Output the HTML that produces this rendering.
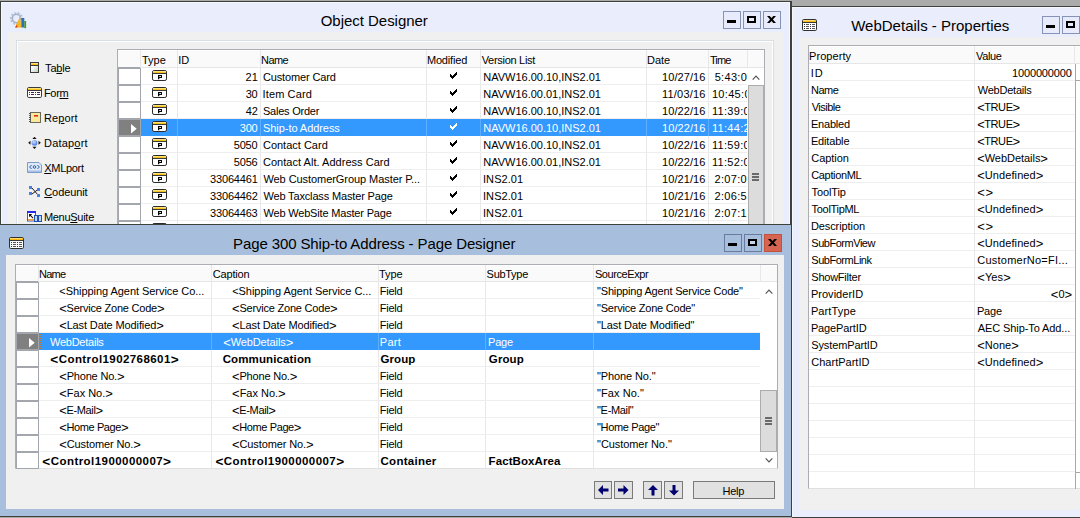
<!DOCTYPE html>
<html><head><meta charset="utf-8"><title>NAV</title><style>
*{box-sizing:border-box;margin:0;padding:0}
html,body{width:1080px;height:518px;overflow:hidden;background:#ABABAB}
body{position:relative;font-family:"Liberation Sans",sans-serif;font-size:11px;color:#000}
.a{position:absolute}
.t{position:absolute;white-space:nowrap;line-height:13px;height:13px}
.tt{position:absolute;white-space:nowrap;font-size:15px;line-height:18px}
.btn{position:absolute;width:18px;height:18px;border:1px solid #8593B6;background:#E7EBFB}
.hl{position:absolute;height:1px;background:#EEEEEE}
.vl{position:absolute;width:1px;background:#E8E8E8}
.sel{position:absolute;background:#fff;border:1px solid #A3A6AD}
.u{text-decoration:underline}
.b{font-weight:bold;font-size:11.5px}
.w{color:#fff}
.g{font-size:118.2%;line-height:0;position:relative;top:1px}
</style></head><body>
<div class="a" style="left:0;top:1px;width:792px;height:224px;background:#E9EDFC;border:1px solid #3E403C;border-right-width:2px;box-shadow:inset 1px 1px 0 #F6F8FF,inset -1px 0 0 #F6F8FF"></div>
<div class="a" style="left:8px;top:32px;width:775px;height:192px;background:#F0F0F0"></div>
<div class="a" style="left:16px;top:40px;width:758px;height:190px;border:1px solid #D9DEE3"></div>
<div class="a" style="left:17px;top:41px;width:756px;height:190px;border:1px solid #FFFFFF"></div>
<div class="tt " style="left:320.72px;top:12px;letter-spacing:-0.032px">Object Designer</div>
<svg class="a" style="left:8px;top:10px" width="20" height="20" viewBox="0 0 20 20"><circle cx="8.5" cy="8.5" r="5" fill="none" stroke="#B9C6DA" stroke-width="3.2" stroke-dasharray="1.7 1.3"/><circle cx="8.5" cy="8.5" r="4.2" fill="none" stroke="#A3B3CB" stroke-width="1.5"/><path d="M7 17.5 L12 6.5 L13.3 17.5Z" fill="#F5B81C"/><path d="M7 17.5 L9 14.5 L9.5 17.5Z" fill="#E23A1A"/><rect x="13.3" y="8" width="3" height="9.5" fill="#2E6FB5"/><rect x="16.3" y="11" width="1.8" height="7.2" fill="#3F9A1E"/></svg>
<div class="btn" style="left:723px;top:11px"></div>
<div class="btn" style="left:743px;top:11px"></div>
<div class="btn" style="left:763px;top:11px"></div>
<div class="a" style="left:727px;top:20px;width:9px;height:3px;background:#000"></div>
<div class="a" style="left:747px;top:16px;width:9px;height:7px;border:2px solid #000;background:transparent"></div>
<svg class="a" style="left:767px;top:16px" width="9" height="7" viewBox="0 0 9 7"><path d="M0 0 H2.7 L4.5 2.1 L6.3 0 H9 L5.9 3.5 L9 7 H6.3 L4.5 4.9 L2.7 7 H0 L3.1 3.5Z" fill="#000"/></svg>
<div class="t " style="left:45.08px;top:62px;letter-spacing:-0.182px">Ta<span class=u>b</span>le</div>
<div class="t " style="left:43.92px;top:87px;letter-spacing:-0.297px">For<span class=u>m</span></div>
<div class="t " style="left:43.92px;top:112px;letter-spacing:0.127px">Re<span class=u>p</span>ort</div>
<div class="t " style="left:44.02px;top:137px;letter-spacing:0.193px">Datap<span class=u>o</span>rt</div>
<div class="t " style="left:44.23px;top:162px;letter-spacing:-0.299px"><span class=u>X</span>MLport</div>
<div class="t " style="left:44.25px;top:186px;letter-spacing:-0.099px"><span class=u>C</span>odeunit</div>
<div class="t " style="left:43.92px;top:211px;letter-spacing:-0.282px">Menu<span class=u>S</span>uite</div>
<svg class="a" style="left:30px;top:62px" width="9" height="11" viewBox="0 0 9 11"><defs><linearGradient id="tg" x1="0" y1="0" x2="1" y2="1"><stop offset="0.3" stop-color="#fff"/><stop offset="1" stop-color="#B9CDB9"/></linearGradient></defs><rect x="0.5" y="0.5" width="8" height="10" fill="url(#tg)" stroke="#3A3A3A"/><rect x="1" y="1" width="7" height="2" fill="#F7BE16"/><rect x="1" y="1" width="7" height="1" fill="#FCE07A"/><rect x="1" y="3" width="7" height="1" fill="#3A3A3A"/></svg>
<svg class="a" style="left:27px;top:87px" width="15" height="11" viewBox="0 0 15 11"><rect x="0.5" y="0.5" width="14" height="10" rx="1.3" fill="#fff" stroke="#3A3A3A"/><rect x="1" y="1" width="13" height="2" fill="#F7BE16"/><rect x="1" y="1" width="13" height="1" fill="#FCE07A"/><rect x="1" y="3" width="13" height="1" fill="#3A3A3A"/><rect x="2" y="5" width="1" height="1" fill="#402850"/><rect x="4" y="5" width="3" height="1" fill="#402850"/><rect x="8" y="5" width="1" height="1" fill="#402850"/><rect x="10" y="5" width="3" height="1" fill="#402850"/><rect x="2" y="7" width="1" height="1" fill="#402850"/><rect x="4" y="7" width="3" height="1" fill="#402850"/><rect x="8" y="7" width="1" height="1" fill="#402850"/><rect x="10" y="7" width="3" height="1" fill="#402850"/></svg>
<svg class="a" style="left:28.5px;top:112px" width="12" height="11" viewBox="0 0 12 11"><rect x="1.5" y="0.5" width="10" height="10" fill="#FBE89A" stroke="#6A6A5A"/><rect x="5" y="3" width="4" height="1.6" fill="#D83018"/><rect x="0" y="1" width="2" height="1" fill="#555"/><rect x="0" y="3" width="2" height="1" fill="#555"/><rect x="0" y="5" width="2" height="1" fill="#555"/><rect x="0" y="7" width="2" height="1" fill="#555"/><rect x="0" y="9" width="2" height="1" fill="#555"/></svg>
<svg class="a" style="left:28px;top:137px" width="13" height="12" viewBox="0 0 13 12"><defs><radialGradient id="bg" cx="0.4" cy="0.35" r="0.7"><stop offset="0" stop-color="#CFE0FF"/><stop offset="1" stop-color="#3D6EDC"/></radialGradient></defs><circle cx="6.5" cy="5.8" r="2.9" fill="url(#bg)"/><path d="M6.5 -0.3 L8.6 2 H4.4Z M6.5 12 L8.6 9.7 H4.4Z M0.2 5.8 L2.5 3.8 V7.8Z M12.8 5.8 L10.5 3.8 V7.8Z" fill="#111"/></svg>
<svg class="a" style="left:27px;top:162px" width="15" height="11" viewBox="0 0 15 11"><path d="M0.5 0.5 H12 L14.5 3 V10.5 H0.5Z" fill="#DCE9FA" stroke="#7E9CC8"/><rect x="1" y="8.5" width="13" height="1.5" fill="#A8C0E6"/><path d="M4.6 3 L2.6 5 L4.6 7 M10.4 3 L12.4 5 L10.4 7" fill="none" stroke="#2C5AA8" stroke-width="1"/><circle cx="7.5" cy="5" r="1.3" fill="none" stroke="#2C5AA8"/></svg>
<svg class="a" style="left:29px;top:186px" width="12" height="11" viewBox="0 0 12 11"><path d="M3 2 L9 9 M3 8 L9 3.5" stroke="#222" stroke-width="1"/><rect x="0" y="0" width="3" height="3" fill="#4A80E6"/><rect x="8" y="2" width="3" height="3" fill="#4A80E6"/><rect x="0" y="6" width="3" height="3" fill="#4A80E6"/><rect x="8" y="8" width="3" height="3" fill="#4A80E6"/></svg>
<svg class="a" style="left:27px;top:211px" width="15" height="11" viewBox="0 0 15 11"><rect x="0.5" y="0.5" width="8" height="9.5" fill="#fff" stroke="#3A56D8"/><rect x="0" y="0" width="9" height="2" fill="#2A2AE8"/><rect x="1" y="8" width="7" height="1.6" fill="#F0A030"/><path d="M2 3 H5.2 L4 4.2 L6.5 6.7 L5.7 7.5 L3.2 5 L2 6.2Z" fill="#111"/><rect x="7.5" y="4.5" width="3" height="6" fill="#BFD6F6" stroke="#2050B0"/><rect x="11.5" y="4.5" width="3" height="6" fill="#BFD6F6" stroke="#2050B0"/></svg>
<div class="a" style="left:117px;top:49px;width:648px;height:180px;background:#fff;border:1px solid #ABADB3"></div>
<div class="a" style="left:118px;top:50px;width:646px;height:18px;background:#FAFAFA;border-top:1px solid #fff;border-bottom:1px solid #E6E6E6"></div>
<div class="a" style="left:118px;top:67px;width:23px;height:1px;background:#A3A6AD"></div>
<div class="vl" style="left:140px;top:50px;height:175px"></div>
<div class="vl" style="left:177px;top:50px;height:175px"></div>
<div class="vl" style="left:260px;top:50px;height:175px"></div>
<div class="vl" style="left:426px;top:50px;height:175px"></div>
<div class="vl" style="left:480px;top:50px;height:175px"></div>
<div class="vl" style="left:646px;top:50px;height:175px"></div>
<div class="vl" style="left:708px;top:50px;height:175px"></div>
<div class="vl" style="left:747px;top:50px;height:18px"></div>
<div class="t " style="left:141.98px;top:54px;letter-spacing:-0.018px">Type</div>
<div class="t " style="left:178.21px;top:54px;letter-spacing:0.000px">ID</div>
<div class="t " style="left:261.12px;top:54px;letter-spacing:-0.598px">Name</div>
<div class="t " style="left:426.92px;top:54px;letter-spacing:-0.163px">Modified</div>
<div class="t " style="left:481.64px;top:54px;letter-spacing:-0.282px">Version List</div>
<div class="t " style="left:647.02px;top:54px;letter-spacing:-0.030px">Date</div>
<div class="t " style="left:709.88px;top:54px;letter-spacing:-0.858px">Time</div>
<div class="sel" style="left:118px;top:68px;width:23px;height:17px"></div>
<div class="hl" style="left:141px;top:84px;width:606px"></div>
<svg class="a" style="left:152px;top:70px" width="15" height="11" viewBox="0 0 15 11"><rect x="0.5" y="0.5" width="14" height="10" rx="1.6" fill="#fff" stroke="#2A2A2A"/><rect x="1" y="1" width="13" height="2" fill="#F8C21C"/><rect x="1" y="1" width="13" height="1" fill="#FDE27A"/><rect x="1" y="3" width="13" height="1" fill="#3A3A3A"/><path d="M6 5 H10 V8 H7.3 V9.2 H6Z M7.3 6 V7 H8.9 V6Z" fill="#000" fill-rule="evenodd"/></svg>
<div class="t " style="left:245.49px;top:71px;letter-spacing:0.095px">21</div>
<div class="t " style="left:262.95px;top:71px;letter-spacing:-0.131px">Customer Card</div>
<svg class="a" style="left:450px;top:72px" width="7" height="7" viewBox="0 0 7 7" fill="#000" shape-rendering="crispEdges"><rect x="0" y="2" width="1" height="3"/><rect x="1" y="3" width="1" height="3"/><rect x="2" y="4" width="1" height="3"/><rect x="3" y="3" width="1" height="3"/><rect x="4" y="2" width="1" height="3"/><rect x="5" y="1" width="1" height="3"/><rect x="6" y="0" width="1" height="3"/></svg>
<div class="t " style="left:483.32px;top:71px;letter-spacing:-0.007px">NAVW16.00.10,INS2.01</div>
<div class="t " style="left:662.07px;top:71px;letter-spacing:0.068px">10/27/16</div>
<div class="a" style="left:709px;top:68px;width:38px;height:16px;overflow:hidden">
<div class="t " style="left:5.66px;top:3px;letter-spacing:0.32px">5:43:0</div></div>
<div class="sel" style="left:118px;top:85px;width:23px;height:17px"></div>
<div class="hl" style="left:141px;top:101px;width:606px"></div>
<svg class="a" style="left:152px;top:87px" width="15" height="11" viewBox="0 0 15 11"><rect x="0.5" y="0.5" width="14" height="10" rx="1.6" fill="#fff" stroke="#2A2A2A"/><rect x="1" y="1" width="13" height="2" fill="#F8C21C"/><rect x="1" y="1" width="13" height="1" fill="#FDE27A"/><rect x="1" y="3" width="13" height="1" fill="#3A3A3A"/><path d="M6 5 H10 V8 H7.3 V9.2 H6Z M7.3 6 V7 H8.9 V6Z" fill="#000" fill-rule="evenodd"/></svg>
<div class="t " style="left:245.66px;top:88px;letter-spacing:-0.180px">30</div>
<div class="t " style="left:262.51px;top:88px;letter-spacing:0.132px">Item Card</div>
<svg class="a" style="left:450px;top:89px" width="7" height="7" viewBox="0 0 7 7" fill="#000" shape-rendering="crispEdges"><rect x="0" y="2" width="1" height="3"/><rect x="1" y="3" width="1" height="3"/><rect x="2" y="4" width="1" height="3"/><rect x="3" y="3" width="1" height="3"/><rect x="4" y="2" width="1" height="3"/><rect x="5" y="1" width="1" height="3"/><rect x="6" y="0" width="1" height="3"/></svg>
<div class="t " style="left:483.32px;top:88px;letter-spacing:-0.007px">NAVW16.00.01,INS2.01</div>
<div class="t " style="left:662.07px;top:88px;letter-spacing:0.186px">11/03/16</div>
<div class="a" style="left:709px;top:85px;width:38px;height:16px;overflow:hidden">
<div class="t " style="left:2.88px;top:3px;letter-spacing:0.32px">10:45:0</div></div>
<div class="sel" style="left:118px;top:102px;width:23px;height:17px"></div>
<div class="hl" style="left:141px;top:118px;width:606px"></div>
<svg class="a" style="left:152px;top:104px" width="15" height="11" viewBox="0 0 15 11"><rect x="0.5" y="0.5" width="14" height="10" rx="1.6" fill="#fff" stroke="#2A2A2A"/><rect x="1" y="1" width="13" height="2" fill="#F8C21C"/><rect x="1" y="1" width="13" height="1" fill="#FDE27A"/><rect x="1" y="3" width="13" height="1" fill="#3A3A3A"/><path d="M6 5 H10 V8 H7.3 V9.2 H6Z M7.3 6 V7 H8.9 V6Z" fill="#000" fill-rule="evenodd"/></svg>
<div class="t " style="left:245.82px;top:105px;letter-spacing:-0.180px">42</div>
<div class="t " style="left:263.00px;top:105px;letter-spacing:-0.238px">Sales Order</div>
<svg class="a" style="left:450px;top:106px" width="7" height="7" viewBox="0 0 7 7" fill="#000" shape-rendering="crispEdges"><rect x="0" y="2" width="1" height="3"/><rect x="1" y="3" width="1" height="3"/><rect x="2" y="4" width="1" height="3"/><rect x="3" y="3" width="1" height="3"/><rect x="4" y="2" width="1" height="3"/><rect x="5" y="1" width="1" height="3"/><rect x="6" y="0" width="1" height="3"/></svg>
<div class="t " style="left:483.32px;top:105px;letter-spacing:-0.007px">NAVW16.00.10,INS2.01</div>
<div class="t " style="left:662.07px;top:105px;letter-spacing:0.068px">10/22/16</div>
<div class="a" style="left:709px;top:102px;width:38px;height:16px;overflow:hidden">
<div class="t " style="left:2.88px;top:3px;letter-spacing:0.32px">11:39:0</div></div>
<div class="a" style="left:141px;top:119px;width:606px;height:17px;background:#3399FF"></div>
<div class="a" style="left:177px;top:119px;width:1px;height:17px;background:#5CAEFF"></div>
<div class="a" style="left:260px;top:119px;width:1px;height:17px;background:#5CAEFF"></div>
<div class="a" style="left:426px;top:119px;width:1px;height:17px;background:#5CAEFF"></div>
<div class="a" style="left:480px;top:119px;width:1px;height:17px;background:#5CAEFF"></div>
<div class="a" style="left:646px;top:119px;width:1px;height:17px;background:#5CAEFF"></div>
<div class="a" style="left:708px;top:119px;width:1px;height:17px;background:#5CAEFF"></div>
<div class="a" style="left:118px;top:119px;width:23px;height:17px;background:#808080;border:1px solid #A3A6AD"></div>
<svg class="a" style="left:130.5px;top:123.6px" width="6" height="10" viewBox="0 0 6 10"><path d="M0 0 L5.7 4.8 L0 9.6Z" fill="#fff"/></svg>
<svg class="a" style="left:152px;top:121px" width="15" height="11" viewBox="0 0 15 11"><rect x="0.5" y="0.5" width="14" height="10" rx="1.6" fill="#fff" stroke="#2A2A2A"/><rect x="1" y="1" width="13" height="2" fill="#F8C21C"/><rect x="1" y="1" width="13" height="1" fill="#FDE27A"/><rect x="1" y="3" width="13" height="1" fill="#3A3A3A"/><path d="M6 5 H10 V8 H7.3 V9.2 H6Z M7.3 6 V7 H8.9 V6Z" fill="#000" fill-rule="evenodd"/></svg>
<div class="t w" style="left:239.73px;top:122px;letter-spacing:-0.178px">300</div>
<div class="t w" style="left:263.00px;top:122px;letter-spacing:-0.056px">Ship-to Address</div>
<svg class="a" style="left:450px;top:123px" width="7" height="7" viewBox="0 0 7 7" fill="#fff" shape-rendering="crispEdges"><rect x="0" y="2" width="1" height="3"/><rect x="1" y="3" width="1" height="3"/><rect x="2" y="4" width="1" height="3"/><rect x="3" y="3" width="1" height="3"/><rect x="4" y="2" width="1" height="3"/><rect x="5" y="1" width="1" height="3"/><rect x="6" y="0" width="1" height="3"/></svg>
<div class="t w" style="left:483.32px;top:122px;letter-spacing:-0.007px">NAVW16.00.10,INS2.01</div>
<div class="t w" style="left:662.07px;top:122px;letter-spacing:0.068px">10/22/16</div>
<div class="a" style="left:709px;top:119px;width:38px;height:16px;overflow:hidden">
<div class="t w" style="left:2.88px;top:3px;letter-spacing:0.32px">11:44:2</div></div>
<div class="sel" style="left:118px;top:136px;width:23px;height:17px"></div>
<div class="hl" style="left:141px;top:152px;width:606px"></div>
<svg class="a" style="left:152px;top:138px" width="15" height="11" viewBox="0 0 15 11"><rect x="0.5" y="0.5" width="14" height="10" rx="1.6" fill="#fff" stroke="#2A2A2A"/><rect x="1" y="1" width="13" height="2" fill="#F8C21C"/><rect x="1" y="1" width="13" height="1" fill="#FDE27A"/><rect x="1" y="3" width="13" height="1" fill="#3A3A3A"/><path d="M6 5 H10 V8 H7.3 V9.2 H6Z M7.3 6 V7 H8.9 V6Z" fill="#000" fill-rule="evenodd"/></svg>
<div class="t " style="left:233.74px;top:139px;letter-spacing:-0.177px">5050</div>
<div class="t " style="left:262.95px;top:139px;letter-spacing:0.002px">Contact Card</div>
<svg class="a" style="left:450px;top:140px" width="7" height="7" viewBox="0 0 7 7" fill="#000" shape-rendering="crispEdges"><rect x="0" y="2" width="1" height="3"/><rect x="1" y="3" width="1" height="3"/><rect x="2" y="4" width="1" height="3"/><rect x="3" y="3" width="1" height="3"/><rect x="4" y="2" width="1" height="3"/><rect x="5" y="1" width="1" height="3"/><rect x="6" y="0" width="1" height="3"/></svg>
<div class="t " style="left:483.32px;top:139px;letter-spacing:-0.007px">NAVW16.00.10,INS2.01</div>
<div class="t " style="left:662.07px;top:139px;letter-spacing:0.068px">10/22/16</div>
<div class="a" style="left:709px;top:136px;width:38px;height:16px;overflow:hidden">
<div class="t " style="left:2.88px;top:3px;letter-spacing:0.32px">11:59:0</div></div>
<div class="sel" style="left:118px;top:153px;width:23px;height:17px"></div>
<div class="hl" style="left:141px;top:169px;width:606px"></div>
<svg class="a" style="left:152px;top:155px" width="15" height="11" viewBox="0 0 15 11"><rect x="0.5" y="0.5" width="14" height="10" rx="1.6" fill="#fff" stroke="#2A2A2A"/><rect x="1" y="1" width="13" height="2" fill="#F8C21C"/><rect x="1" y="1" width="13" height="1" fill="#FDE27A"/><rect x="1" y="3" width="13" height="1" fill="#3A3A3A"/><path d="M6 5 H10 V8 H7.3 V9.2 H6Z M7.3 6 V7 H8.9 V6Z" fill="#000" fill-rule="evenodd"/></svg>
<div class="t " style="left:233.74px;top:156px;letter-spacing:-0.158px">5056</div>
<div class="t " style="left:262.95px;top:156px;letter-spacing:0.032px">Contact Alt. Address Card</div>
<svg class="a" style="left:450px;top:157px" width="7" height="7" viewBox="0 0 7 7" fill="#000" shape-rendering="crispEdges"><rect x="0" y="2" width="1" height="3"/><rect x="1" y="3" width="1" height="3"/><rect x="2" y="4" width="1" height="3"/><rect x="3" y="3" width="1" height="3"/><rect x="4" y="2" width="1" height="3"/><rect x="5" y="1" width="1" height="3"/><rect x="6" y="0" width="1" height="3"/></svg>
<div class="t " style="left:483.32px;top:156px;letter-spacing:-0.007px">NAVW16.00.01,INS2.01</div>
<div class="t " style="left:662.07px;top:156px;letter-spacing:0.068px">10/22/16</div>
<div class="a" style="left:709px;top:153px;width:38px;height:16px;overflow:hidden">
<div class="t " style="left:2.88px;top:3px;letter-spacing:0.32px">11:52:0</div></div>
<div class="sel" style="left:118px;top:170px;width:23px;height:17px"></div>
<div class="hl" style="left:141px;top:186px;width:606px"></div>
<svg class="a" style="left:152px;top:172px" width="15" height="11" viewBox="0 0 15 11"><rect x="0.5" y="0.5" width="14" height="10" rx="1.6" fill="#fff" stroke="#2A2A2A"/><rect x="1" y="1" width="13" height="2" fill="#F8C21C"/><rect x="1" y="1" width="13" height="1" fill="#FDE27A"/><rect x="1" y="3" width="13" height="1" fill="#3A3A3A"/><path d="M6 5 H10 V8 H7.3 V9.2 H6Z M7.3 6 V7 H8.9 V6Z" fill="#000" fill-rule="evenodd"/></svg>
<div class="t " style="left:210.08px;top:173px;letter-spacing:-0.176px">33064461</div>
<div class="t " style="left:263.44px;top:173px;letter-spacing:-0.065px">Web CustomerGroup Master P...</div>
<svg class="a" style="left:450px;top:174px" width="7" height="7" viewBox="0 0 7 7" fill="#000" shape-rendering="crispEdges"><rect x="0" y="2" width="1" height="3"/><rect x="1" y="3" width="1" height="3"/><rect x="2" y="4" width="1" height="3"/><rect x="3" y="3" width="1" height="3"/><rect x="4" y="2" width="1" height="3"/><rect x="5" y="1" width="1" height="3"/><rect x="6" y="0" width="1" height="3"/></svg>
<div class="t " style="left:483.01px;top:173px;letter-spacing:0.063px">INS2.01</div>
<div class="t " style="left:662.07px;top:173px;letter-spacing:0.068px">10/21/16</div>
<div class="a" style="left:709px;top:170px;width:38px;height:16px;overflow:hidden">
<div class="t " style="left:5.55px;top:3px;letter-spacing:0.32px">2:07:0</div></div>
<div class="sel" style="left:118px;top:187px;width:23px;height:17px"></div>
<div class="hl" style="left:141px;top:203px;width:606px"></div>
<svg class="a" style="left:152px;top:189px" width="15" height="11" viewBox="0 0 15 11"><rect x="0.5" y="0.5" width="14" height="10" rx="1.6" fill="#fff" stroke="#2A2A2A"/><rect x="1" y="1" width="13" height="2" fill="#F8C21C"/><rect x="1" y="1" width="13" height="1" fill="#FDE27A"/><rect x="1" y="3" width="13" height="1" fill="#3A3A3A"/><path d="M6 5 H10 V8 H7.3 V9.2 H6Z M7.3 6 V7 H8.9 V6Z" fill="#000" fill-rule="evenodd"/></svg>
<div class="t " style="left:210.08px;top:190px;letter-spacing:-0.168px">33064462</div>
<div class="t " style="left:263.44px;top:190px;letter-spacing:-0.152px">Web Taxclass Master Page</div>
<svg class="a" style="left:450px;top:191px" width="7" height="7" viewBox="0 0 7 7" fill="#000" shape-rendering="crispEdges"><rect x="0" y="2" width="1" height="3"/><rect x="1" y="3" width="1" height="3"/><rect x="2" y="4" width="1" height="3"/><rect x="3" y="3" width="1" height="3"/><rect x="4" y="2" width="1" height="3"/><rect x="5" y="1" width="1" height="3"/><rect x="6" y="0" width="1" height="3"/></svg>
<div class="t " style="left:483.01px;top:190px;letter-spacing:0.063px">INS2.01</div>
<div class="t " style="left:662.07px;top:190px;letter-spacing:0.068px">10/21/16</div>
<div class="a" style="left:709px;top:187px;width:38px;height:16px;overflow:hidden">
<div class="t " style="left:5.55px;top:3px;letter-spacing:0.32px">2:06:5</div></div>
<div class="sel" style="left:118px;top:204px;width:23px;height:17px"></div>
<div class="hl" style="left:141px;top:220px;width:606px"></div>
<svg class="a" style="left:152px;top:206px" width="15" height="11" viewBox="0 0 15 11"><rect x="0.5" y="0.5" width="14" height="10" rx="1.6" fill="#fff" stroke="#2A2A2A"/><rect x="1" y="1" width="13" height="2" fill="#F8C21C"/><rect x="1" y="1" width="13" height="1" fill="#FDE27A"/><rect x="1" y="3" width="13" height="1" fill="#3A3A3A"/><path d="M6 5 H10 V8 H7.3 V9.2 H6Z M7.3 6 V7 H8.9 V6Z" fill="#000" fill-rule="evenodd"/></svg>
<div class="t " style="left:210.08px;top:207px;letter-spacing:-0.184px">33064463</div>
<div class="t " style="left:263.44px;top:207px;letter-spacing:-0.176px">Web WebSite Master Page</div>
<svg class="a" style="left:450px;top:208px" width="7" height="7" viewBox="0 0 7 7" fill="#000" shape-rendering="crispEdges"><rect x="0" y="2" width="1" height="3"/><rect x="1" y="3" width="1" height="3"/><rect x="2" y="4" width="1" height="3"/><rect x="3" y="3" width="1" height="3"/><rect x="4" y="2" width="1" height="3"/><rect x="5" y="1" width="1" height="3"/><rect x="6" y="0" width="1" height="3"/></svg>
<div class="t " style="left:483.01px;top:207px;letter-spacing:0.063px">INS2.01</div>
<div class="t " style="left:662.07px;top:207px;letter-spacing:0.068px">10/21/16</div>
<div class="a" style="left:709px;top:204px;width:38px;height:16px;overflow:hidden">
<div class="t " style="left:5.55px;top:3px;letter-spacing:0.32px">2:07:1</div></div>
<div class="sel" style="left:118px;top:221px;width:23px;height:17px"></div>
<div class="hl" style="left:141px;top:237px;width:606px"></div>
<svg class="a" style="left:152px;top:223px" width="15" height="11" viewBox="0 0 15 11"><rect x="0.5" y="0.5" width="14" height="10" rx="1.6" fill="#fff" stroke="#2A2A2A"/><rect x="1" y="1" width="13" height="2" fill="#F8C21C"/><rect x="1" y="1" width="13" height="1" fill="#FDE27A"/><rect x="1" y="3" width="13" height="1" fill="#3A3A3A"/><path d="M6 5 H10 V8 H7.3 V9.2 H6Z M7.3 6 V7 H8.9 V6Z" fill="#000" fill-rule="evenodd"/></svg>
<div class="a" style="left:748px;top:68px;width:16px;height:160px;background:#fff"></div>
<svg class="a" style="left:751.5px;top:75px" width="8" height="5" viewBox="0 0 9 6"><path d="M0.5 5.5 L4.5 1.2 L8.5 5.5" fill="none" stroke="#555" stroke-width="1.4"/></svg>
<div class="a" style="left:748px;top:85px;width:16px;height:140px;background:#DCDCDC;border:1px solid #ACACAC"></div>
<div class="a" style="left:752px;top:173px;width:7px;height:2px;background:#6A6A6A"></div>
<div class="a" style="left:752px;top:176px;width:7px;height:2px;background:#6A6A6A"></div>
<div class="a" style="left:752px;top:179px;width:7px;height:2px;background:#6A6A6A"></div>
<div class="a" style="left:0;top:224px;width:792px;height:293px;background:#A7BFDC;border-top:1px solid #3E403C;border-right:1px solid #3E403C;border-bottom:1px solid #3E403C"></div>
<div class="a" style="left:6px;top:255px;width:778px;height:254px;background:#F0F0F0"></div>
<div class="tt " style="left:233.10px;top:235px;letter-spacing:-0.117px">Page 300 Ship-to Address - Page Designer</div>
<svg class="a" style="left:9px;top:237px" width="15" height="12" viewBox="0 0 15 12"><rect x="0.5" y="0.5" width="14" height="11" rx="1.3" fill="#fff" stroke="#303030"/><rect x="1" y="1" width="13" height="2" fill="#F9B50F"/><rect x="1" y="1" width="12" height="1" fill="#FDDE6C"/><rect x="1" y="3" width="13" height="1" fill="#3A3A3A"/><rect x="2" y="5" width="1" height="1" fill="#333"/><rect x="4" y="5" width="3" height="1" fill="#555"/><rect x="8" y="5" width="1" height="1" fill="#333"/><rect x="10" y="5" width="3" height="1" fill="#555"/><rect x="2" y="7" width="1" height="1" fill="#333"/><rect x="4" y="7" width="3" height="1" fill="#555"/><rect x="8" y="7" width="1" height="1" fill="#333"/><rect x="10" y="7" width="3" height="1" fill="#555"/><rect x="2" y="9" width="1" height="1" fill="#333"/><rect x="4" y="9" width="3" height="1" fill="#555"/><rect x="8" y="9" width="1" height="1" fill="#333"/><rect x="10" y="9" width="3" height="1" fill="#555"/></svg>
<div class="btn" style="left:724px;top:234px;background:#A7BFDC;border-color:#6A7C9E"></div>
<div class="btn" style="left:744px;top:234px;background:#A7BFDC;border-color:#6A7C9E"></div>
<div class="btn" style="left:764px;top:234px;background:#D56551;border-color:#C4513A"></div>
<div class="a" style="left:728px;top:243px;width:9px;height:3px;background:#000"></div>
<div class="a" style="left:748px;top:239px;width:9px;height:7px;border:2px solid #000;background:#C6D6EA"></div>
<svg class="a" style="left:768px;top:239px" width="9" height="7" viewBox="0 0 9 7"><path d="M0 0 H2.7 L4.5 2.1 L6.3 0 H9 L5.9 3.5 L9 7 H6.3 L4.5 4.9 L2.7 7 H0 L3.1 3.5Z" fill="#000"/></svg>
<div class="a" style="left:15px;top:264px;width:763px;height:205px;background:#fff;border:1px solid #ABADB3;border-bottom-color:#E0E0E0"></div>
<div class="a" style="left:16px;top:265px;width:761px;height:17px;background:#FAFAFA;border-top:1px solid #fff;border-bottom:1px solid #E6E6E6"></div>
<div class="a" style="left:16px;top:281px;width:23px;height:1px;background:#A3A6AD"></div>
<div class="vl" style="left:38px;top:265px;height:203px"></div>
<div class="vl" style="left:211px;top:265px;height:203px"></div>
<div class="vl" style="left:378px;top:265px;height:203px"></div>
<div class="vl" style="left:485px;top:265px;height:203px"></div>
<div class="vl" style="left:593px;top:265px;height:203px"></div>
<div class="vl" style="left:760px;top:265px;height:17px"></div>
<div class="t " style="left:39.02px;top:268px;letter-spacing:-0.732px">Name</div>
<div class="t " style="left:212.75px;top:268px;letter-spacing:-0.164px">Caption</div>
<div class="t " style="left:378.98px;top:268px;letter-spacing:-0.085px">Type</div>
<div class="t " style="left:486.61px;top:268px;letter-spacing:-0.293px">SubType</div>
<div class="t " style="left:594.90px;top:268px;letter-spacing:-0.402px">SourceExpr</div>
<div class="sel" style="left:16px;top:282px;width:23px;height:17px"></div>
<div class="hl" style="left:39px;top:298px;width:721px"></div>
<div class="t " style="left:59.25px;top:285px;letter-spacing:-0.047px">&lt;Shipping Agent Service Co...</div>
<div class="t " style="left:232.15px;top:285px;letter-spacing:-0.041px">&lt;Shipping Agent Service C...</div>
<div class="t " style="left:379.82px;top:285px;letter-spacing:-0.244px">Field</div>
<div class="t " style="left:597.06px;top:285px;letter-spacing:-0.180px">"Shipping Agent Service Code"</div>
<div class="sel" style="left:16px;top:299px;width:23px;height:17px"></div>
<div class="hl" style="left:39px;top:315px;width:721px"></div>
<div class="t " style="left:59.15px;top:302px;letter-spacing:-0.220px"><span class="g">&lt;</span>Service Zone Code<span class="g">&gt;</span></div>
<div class="t " style="left:232.05px;top:302px;letter-spacing:-0.209px"><span class="g">&lt;</span>Service Zone Code<span class="g">&gt;</span></div>
<div class="t " style="left:379.82px;top:302px;letter-spacing:-0.244px">Field</div>
<div class="t " style="left:597.06px;top:302px;letter-spacing:-0.216px">"Service Zone Code"</div>
<div class="sel" style="left:16px;top:316px;width:23px;height:17px"></div>
<div class="hl" style="left:39px;top:332px;width:721px"></div>
<div class="t " style="left:59.15px;top:319px;letter-spacing:-0.122px"><span class="g">&lt;</span>Last Date Modified<span class="g">&gt;</span></div>
<div class="t " style="left:232.05px;top:319px;letter-spacing:-0.122px"><span class="g">&lt;</span>Last Date Modified<span class="g">&gt;</span></div>
<div class="t " style="left:379.82px;top:319px;letter-spacing:-0.244px">Field</div>
<div class="t " style="left:597.06px;top:319px;letter-spacing:-0.119px">"Last Date Modified"</div>
<div class="a" style="left:39px;top:333px;width:721px;height:17px;background:#3399FF"></div>
<div class="a" style="left:211px;top:333px;width:1px;height:17px;background:#5CAEFF"></div>
<div class="a" style="left:378px;top:333px;width:1px;height:17px;background:#5CAEFF"></div>
<div class="a" style="left:485px;top:333px;width:1px;height:17px;background:#5CAEFF"></div>
<div class="a" style="left:593px;top:333px;width:1px;height:17px;background:#5CAEFF"></div>
<div class="a" style="left:40px;top:334px;width:170px;height:15px;border:1px dotted #C27A2C"></div>
<div class="a" style="left:16px;top:333px;width:23px;height:17px;background:#808080;border:1px solid #A3A6AD"></div>
<svg class="a" style="left:28.8px;top:337.8px" width="6" height="10" viewBox="0 0 6 10"><path d="M0 0 L5.7 4.8 L0 9.6Z" fill="#fff"/></svg>
<div class="t w" style="left:49.95px;top:336px;letter-spacing:-0.234px">WebDetails</div>
<div class="t w" style="left:223.15px;top:336px;letter-spacing:-0.104px"><span class="g">&lt;</span>WebDetails<span class="g">&gt;</span></div>
<div class="t w" style="left:379.82px;top:336px;letter-spacing:0.235px">Part</div>
<div class="t w" style="left:488.12px;top:336px;letter-spacing:-0.255px">Page</div>
<div class="sel" style="left:16px;top:350px;width:23px;height:17px"></div>
<div class="hl" style="left:39px;top:366px;width:721px"></div>
<div class="t  b" style="left:50.36px;top:353px;letter-spacing:0.420px"><span class="g">&lt;</span>Control1902768601<span class="g">&gt;</span></div>
<div class="t  b" style="left:222.64px;top:353px;letter-spacing:0.131px">Communication</div>
<div class="t  b" style="left:380.54px;top:353px;letter-spacing:0.080px">Group</div>
<div class="t  b" style="left:488.84px;top:353px;letter-spacing:0.105px">Group</div>
<div class="sel" style="left:16px;top:367px;width:23px;height:17px"></div>
<div class="hl" style="left:39px;top:383px;width:721px"></div>
<div class="t " style="left:59.25px;top:370px;letter-spacing:-0.188px"><span class="g">&lt;</span>Phone No.<span class="g">&gt;</span></div>
<div class="t " style="left:232.05px;top:370px;letter-spacing:-0.188px"><span class="g">&lt;</span>Phone No.<span class="g">&gt;</span></div>
<div class="t " style="left:379.82px;top:370px;letter-spacing:-0.244px">Field</div>
<div class="t " style="left:597.06px;top:370px;letter-spacing:-0.130px">"Phone No."</div>
<div class="sel" style="left:16px;top:384px;width:23px;height:17px"></div>
<div class="hl" style="left:39px;top:400px;width:721px"></div>
<div class="t " style="left:59.25px;top:387px;letter-spacing:-0.013px"><span class="g">&lt;</span>Fax No.<span class="g">&gt;</span></div>
<div class="t " style="left:232.05px;top:387px;letter-spacing:-0.013px"><span class="g">&lt;</span>Fax No.<span class="g">&gt;</span></div>
<div class="t " style="left:379.82px;top:387px;letter-spacing:-0.244px">Field</div>
<div class="t " style="left:597.06px;top:387px;letter-spacing:0.059px">"Fax No."</div>
<div class="sel" style="left:16px;top:401px;width:23px;height:17px"></div>
<div class="hl" style="left:39px;top:417px;width:721px"></div>
<div class="t " style="left:59.25px;top:404px;letter-spacing:-0.352px"><span class="g">&lt;</span>E-Mail<span class="g">&gt;</span></div>
<div class="t " style="left:232.05px;top:404px;letter-spacing:-0.352px"><span class="g">&lt;</span>E-Mail<span class="g">&gt;</span></div>
<div class="t " style="left:379.82px;top:404px;letter-spacing:-0.244px">Field</div>
<div class="t " style="left:597.06px;top:404px;letter-spacing:-0.331px">"E-Mail"</div>
<div class="sel" style="left:16px;top:418px;width:23px;height:17px"></div>
<div class="hl" style="left:39px;top:434px;width:721px"></div>
<div class="t " style="left:59.25px;top:421px;letter-spacing:-0.389px"><span class="g">&lt;</span>Home Page<span class="g">&gt;</span></div>
<div class="t " style="left:232.05px;top:421px;letter-spacing:-0.389px"><span class="g">&lt;</span>Home Page<span class="g">&gt;</span></div>
<div class="t " style="left:379.82px;top:421px;letter-spacing:-0.244px">Field</div>
<div class="t " style="left:597.06px;top:421px;letter-spacing:-0.351px">"Home Page"</div>
<div class="sel" style="left:16px;top:435px;width:23px;height:17px"></div>
<div class="hl" style="left:39px;top:451px;width:721px"></div>
<div class="t " style="left:59.25px;top:438px;letter-spacing:-0.112px"><span class="g">&lt;</span>Customer No.<span class="g">&gt;</span></div>
<div class="t " style="left:232.05px;top:438px;letter-spacing:-0.112px"><span class="g">&lt;</span>Customer No.<span class="g">&gt;</span></div>
<div class="t " style="left:379.82px;top:438px;letter-spacing:-0.244px">Field</div>
<div class="t " style="left:597.06px;top:438px;letter-spacing:-0.069px">"Customer No."</div>
<div class="sel" style="left:16px;top:452px;width:23px;height:17px"></div>
<div class="t  b" style="left:42.36px;top:455px;letter-spacing:0.442px"><span class="g">&lt;</span>Control1900000007<span class="g">&gt;</span></div>
<div class="t  b" style="left:215.46px;top:455px;letter-spacing:0.442px"><span class="g">&lt;</span>Control1900000007<span class="g">&gt;</span></div>
<div class="t  b" style="left:380.54px;top:455px;letter-spacing:0.266px">Container</div>
<div class="t  b" style="left:488.55px;top:455px;letter-spacing:0.088px">FactBoxArea</div>
<div class="a" style="left:760px;top:282px;width:17px;height:186px;background:#fff"></div>
<svg class="a" style="left:764.5px;top:289px" width="8" height="5" viewBox="0 0 9 6"><path d="M0.5 5.5 L4.5 1.2 L8.5 5.5" fill="none" stroke="#555" stroke-width="1.4"/></svg>
<svg class="a" style="left:764.5px;top:458px" width="8" height="5" viewBox="0 0 9 6"><path d="M0.5 0.5 L4.5 4.8 L8.5 0.5" fill="none" stroke="#555" stroke-width="1.4"/></svg>
<div class="a" style="left:760px;top:390px;width:17px;height:62px;background:#DCDCDC;border:1px solid #ACACAC"></div>
<div class="a" style="left:765px;top:417px;width:7px;height:2px;background:#6A6A6A"></div>
<div class="a" style="left:765px;top:420px;width:7px;height:2px;background:#6A6A6A"></div>
<div class="a" style="left:765px;top:423px;width:7px;height:2px;background:#6A6A6A"></div>
<div class="a" style="left:594px;top:481px;width:18px;height:18px;background:#E1E1E1;border:1px solid #7A7A7A"><svg class="a" style="left:3px;top:3px" width="11" height="11" viewBox="0 0 11 11"><path d="M0 5 L5 0 V3.5 H10.5 V6.5 H5 V10Z" fill="#00006E"/></svg></div>
<div class="a" style="left:614px;top:481px;width:19px;height:18px;background:#E1E1E1;border:1px solid #7A7A7A"><svg class="a" style="left:3px;top:3px" width="11" height="11" viewBox="0 0 11 11"><path d="M10.5 5 L5.5 0 V3.5 H0 V6.5 H5.5 V10Z" fill="#00006E"/></svg></div>
<div class="a" style="left:643px;top:481px;width:19px;height:18px;background:#E1E1E1;border:1px solid #7A7A7A"><svg class="a" style="left:4px;top:3px" width="11" height="11" viewBox="0 0 11 11"><path d="M5 0 L0 5 H3.5 V10.5 H6.5 V5 H10Z" fill="#00006E"/></svg></div>
<div class="a" style="left:664px;top:481px;width:19px;height:18px;background:#E1E1E1;border:1px solid #7A7A7A"><svg class="a" style="left:4px;top:3px" width="11" height="11" viewBox="0 0 11 11"><path d="M5 10.5 L0 5.5 H3.5 V0 H6.5 V5.5 H10Z" fill="#00006E"/></svg></div>
<div class="a" style="left:693px;top:481px;width:82px;height:18px;background:#E1E1E1;border:1px solid #7A7A7A"></div>
<div class="t " style="left:722.42px;top:485px;letter-spacing:-0.195px">Help</div>
<div class="a" style="left:792px;top:6px;width:300px;height:512px;background:#E9EDFC;border-top:1px solid #3E403C;border-bottom:1px solid #3E403C;box-shadow:inset 1px 1px 0 #F6F8FF"></div>
<div class="a" style="left:799px;top:37px;width:290px;height:473px;background:#F0F0F0"></div>
<div class="tt " style="left:851.22px;top:17px;letter-spacing:-0.000px">WebDetails - Properties</div>
<svg class="a" style="left:802px;top:19px" width="15" height="12" viewBox="0 0 15 12"><rect x="0.5" y="0.5" width="14" height="11" rx="1.3" fill="#fff" stroke="#303030"/><rect x="1" y="1" width="13" height="2" fill="#F9B50F"/><rect x="1" y="1" width="12" height="1" fill="#FDDE6C"/><rect x="1" y="3" width="13" height="1" fill="#3A3A3A"/><rect x="2" y="5" width="1" height="1" fill="#333"/><rect x="4" y="5" width="3" height="1" fill="#555"/><rect x="8" y="5" width="1" height="1" fill="#333"/><rect x="10" y="5" width="3" height="1" fill="#555"/><rect x="2" y="7" width="1" height="1" fill="#333"/><rect x="4" y="7" width="3" height="1" fill="#555"/><rect x="8" y="7" width="1" height="1" fill="#333"/><rect x="10" y="7" width="3" height="1" fill="#555"/><rect x="2" y="9" width="1" height="1" fill="#333"/><rect x="4" y="9" width="3" height="1" fill="#555"/><rect x="8" y="9" width="1" height="1" fill="#333"/><rect x="10" y="9" width="3" height="1" fill="#555"/></svg>
<div class="btn" style="left:1042px;top:16px"></div>
<div class="btn" style="left:1062px;top:16px"></div>
<div class="a" style="left:1046px;top:25px;width:9px;height:3px;background:#000"></div>
<div class="a" style="left:1066px;top:21px;width:9px;height:7px;border:2px solid #000;background:transparent"></div>
<div class="a" style="left:808px;top:45px;width:280px;height:444px;background:#fff;border:1px solid #ABADB3;border-bottom-color:#E0E0E0"></div>
<div class="a" style="left:809px;top:46px;width:272px;height:18px;background:#FAFAFA;border-top:1px solid #fff;border-bottom:1px solid #E6E6E6"></div>
<div class="vl" style="left:974px;top:46px;height:442px"></div>
<div class="vl" style="left:1074px;top:46px;height:18px"></div>
<div class="a" style="left:1075px;top:64px;width:1px;height:425px;background:#A8A8A8"></div>
<div class="a" style="left:1075px;top:80px;width:5px;height:1px;background:#A8A8A8"></div>
<div class="a" style="left:1075px;top:472px;width:5px;height:1px;background:#A8A8A8"></div>
<div class="t " style="left:809.12px;top:50px;letter-spacing:0.043px">Property</div>
<div class="t " style="left:976.05px;top:50px;letter-spacing:-0.346px">Value</div>
<div class="hl" style="left:809px;top:80px;width:266px"></div>
<div class="t " style="left:810.81px;top:67px;letter-spacing:0.985px">ID</div>
<div class="t " style="left:1011.97px;top:67px;letter-spacing:-0.139px">1000000000</div>
<div class="hl" style="left:809px;top:97px;width:266px"></div>
<div class="t " style="left:810.92px;top:84px;letter-spacing:-0.465px">Name</div>
<div class="t " style="left:977.75px;top:84px;letter-spacing:-0.234px">WebDetails</div>
<div class="hl" style="left:809px;top:114px;width:266px"></div>
<div class="t " style="left:811.75px;top:101px;letter-spacing:-0.530px">Visible</div>
<div class="t " style="left:977.15px;top:101px;letter-spacing:-0.428px"><span class="g">&lt;</span>TRUE<span class="g">&gt;</span></div>
<div class="hl" style="left:809px;top:131px;width:266px"></div>
<div class="t " style="left:810.92px;top:118px;letter-spacing:-0.188px">Enabled</div>
<div class="t " style="left:977.15px;top:118px;letter-spacing:-0.428px"><span class="g">&lt;</span>TRUE<span class="g">&gt;</span></div>
<div class="hl" style="left:809px;top:148px;width:266px"></div>
<div class="t " style="left:810.92px;top:135px;letter-spacing:-0.164px">Editable</div>
<div class="t " style="left:977.15px;top:135px;letter-spacing:-0.428px"><span class="g">&lt;</span>TRUE<span class="g">&gt;</span></div>
<div class="hl" style="left:809px;top:165px;width:266px"></div>
<div class="t " style="left:811.25px;top:152px;letter-spacing:-0.031px">Caption</div>
<div class="t " style="left:977.15px;top:152px;letter-spacing:-0.040px"><span class="g">&lt;</span>WebDetails<span class="g">&gt;</span></div>
<div class="hl" style="left:809px;top:182px;width:266px"></div>
<div class="t " style="left:811.25px;top:169px;letter-spacing:-0.351px">CaptionML</div>
<div class="t " style="left:977.15px;top:169px;letter-spacing:0.085px"><span class="g">&lt;</span>Undefined<span class="g">&gt;</span></div>
<div class="hl" style="left:809px;top:199px;width:266px"></div>
<div class="t " style="left:811.58px;top:186px;letter-spacing:-0.112px">ToolTip</div>
<div class="t " style="left:977.15px;top:186px;letter-spacing:0.703px"><span class="g">&lt;</span><span class="g">&gt;</span></div>
<div class="hl" style="left:809px;top:216px;width:266px"></div>
<div class="t " style="left:811.58px;top:203px;letter-spacing:-0.309px">ToolTipML</div>
<div class="t " style="left:977.15px;top:203px;letter-spacing:0.085px"><span class="g">&lt;</span>Undefined<span class="g">&gt;</span></div>
<div class="hl" style="left:809px;top:233px;width:266px"></div>
<div class="t " style="left:810.92px;top:220px;letter-spacing:-0.086px">Description</div>
<div class="t " style="left:977.15px;top:220px;letter-spacing:0.703px"><span class="g">&lt;</span><span class="g">&gt;</span></div>
<div class="hl" style="left:809px;top:250px;width:266px"></div>
<div class="t " style="left:811.30px;top:237px;letter-spacing:-0.472px">SubFormView</div>
<div class="t " style="left:977.15px;top:237px;letter-spacing:0.085px"><span class="g">&lt;</span>Undefined<span class="g">&gt;</span></div>
<div class="hl" style="left:809px;top:267px;width:266px"></div>
<div class="t " style="left:811.30px;top:254px;letter-spacing:-0.470px">SubFormLink</div>
<div class="t " style="left:977.25px;top:254px;letter-spacing:0.235px">CustomerNo=FI...</div>
<div class="hl" style="left:809px;top:284px;width:266px"></div>
<div class="t " style="left:811.30px;top:271px;letter-spacing:-0.246px">ShowFilter</div>
<div class="t " style="left:977.15px;top:271px;letter-spacing:0.139px"><span class="g">&lt;</span>Yes<span class="g">&gt;</span></div>
<div class="hl" style="left:809px;top:301px;width:266px"></div>
<div class="t " style="left:810.92px;top:288px;letter-spacing:0.028px">ProviderID</div>
<div class="t " style="left:1050.75px;top:288px;letter-spacing:0.043px"><span class="g">&lt;</span>0<span class="g">&gt;</span></div>
<div class="hl" style="left:809px;top:318px;width:266px"></div>
<div class="t " style="left:810.92px;top:305px;letter-spacing:0.117px">PartType</div>
<div class="t " style="left:976.92px;top:305px;letter-spacing:-0.188px">Page</div>
<div class="hl" style="left:809px;top:335px;width:266px"></div>
<div class="t " style="left:810.92px;top:322px;letter-spacing:-0.127px">PagePartID</div>
<div class="t " style="left:977.80px;top:322px;letter-spacing:-0.101px">AEC Ship-To Add...</div>
<div class="hl" style="left:809px;top:352px;width:266px"></div>
<div class="t " style="left:811.30px;top:339px;letter-spacing:-0.130px">SystemPartID</div>
<div class="t " style="left:977.15px;top:339px;letter-spacing:0.041px"><span class="g">&lt;</span>None<span class="g">&gt;</span></div>
<div class="hl" style="left:809px;top:369px;width:266px"></div>
<div class="t " style="left:811.25px;top:356px;letter-spacing:0.012px">ChartPartID</div>
<div class="t " style="left:977.15px;top:356px;letter-spacing:0.085px"><span class="g">&lt;</span>Undefined<span class="g">&gt;</span></div>
<div class="hl" style="left:809px;top:386px;width:266px"></div>
<div class="hl" style="left:809px;top:403px;width:266px"></div>
<div class="hl" style="left:809px;top:420px;width:266px"></div>
<div class="hl" style="left:809px;top:437px;width:266px"></div>
<div class="hl" style="left:809px;top:454px;width:266px"></div>
<div class="hl" style="left:809px;top:471px;width:266px"></div>
</body></html>
